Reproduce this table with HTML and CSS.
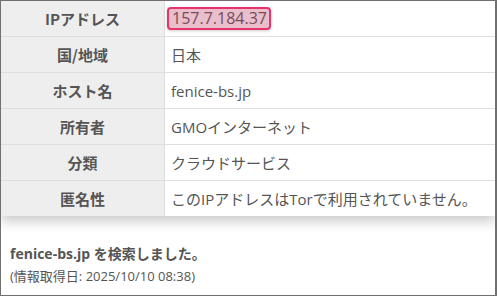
FILE: index.html
```html
<!DOCTYPE html>
<html lang="ja">
<head>
<meta charset="utf-8">
<title>IP</title>
<link rel="stylesheet" href="styles.css">
</head>
<body>
<div class="frame">
  <table class="info">
    <tr><th>IPアドレス</th><td><span class="ip">157.7.184.37</span></td></tr>
    <tr><th>国/地域</th><td>日本</td></tr>
    <tr><th>ホスト名</th><td>fenice-bs.jp</td></tr>
    <tr><th>所有者</th><td>GMOインターネット</td></tr>
    <tr><th>分類</th><td>クラウドサービス</td></tr>
    <tr><th>匿名性</th><td>このIPアドレスはTorで利用されていません。</td></tr>
  </table>
  <div class="result">
    <p class="searched">fenice-bs.jp を検索しました。</p>
    <p class="date">(情報取得日: 2025/10/10 08:38)</p>
  </div>
</div>
</body>
</html>
```
FILE: styles.css
```css
html, body {
  margin: 0;
  padding: 0;
  background: #fff;
}
body {
  font-family: "Open Sans", "Noto Sans CJK JP", sans-serif;
  color: #555;
}
.frame {
  box-sizing: border-box;
  width: 497px;
  height: 296px;
  border: 1px solid #707070;
  border-right-width: 2px;
  overflow: hidden;
}
.info {
  width: 100%;
  border-collapse: collapse;
  box-shadow: 0 5px 12px rgba(0, 0, 0, 0.22);
}
.info th,
.info td {
  height: 35px;
  padding: 0;
  border-bottom: 1px solid #dedede;
  font-size: 15px;
  line-height: 20px;
}
.info tr:last-child th,
.info tr:last-child td {
  border-bottom: none;
  height: 35px;
}
.info th {
  width: 163px;
  background: #eeeeee;
  border-right: 1px solid #dedede;
  font-weight: bold;
  text-align: center;
  color: #555;
  font-family: "Noto Sans CJK JP", sans-serif;
}
.info td {
  background: #fff;
  padding-left: 6px;
  text-align: left;
}
.ip {
  display: inline-block;
  margin-left: -4px;
  padding: 0 2px 0 3px;
  border: 2px solid #e8336b;
  border-radius: 4px;
  background: #e8bfcb;
  color: #7b4a5b;
  line-height: 19px;
  font-size: 16px;
  box-shadow: 0 1px 3px rgba(0, 0, 0, 0.2);
}
.result {
  padding: 27px 9px 0;
}
.result p {
  margin: 0;
}
.searched {
  font-size: 14px;
  font-weight: bold;
  line-height: 22px;
}
.date {
  font-size: 13px;
  line-height: 22px;
}
```
